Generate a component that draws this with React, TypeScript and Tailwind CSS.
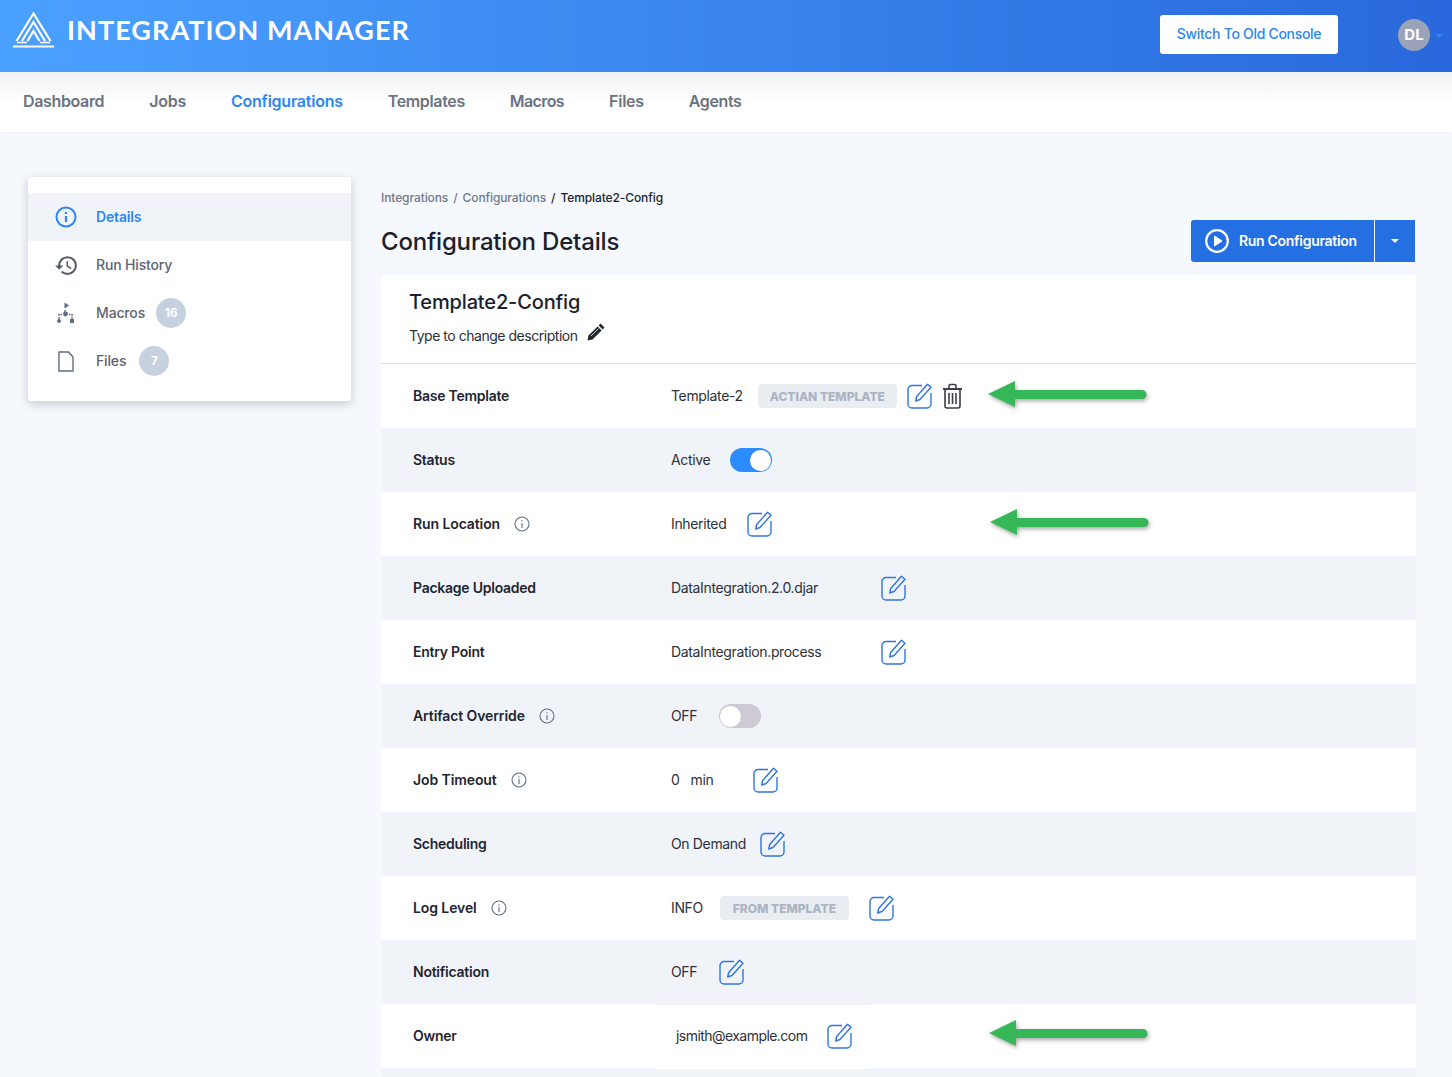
import React from "react";
import { MdHistory } from "react-icons/md";

const font = { fontFamily: '"Inter", sans-serif' };

function EditIcon() {
  return (
    <svg width="25" height="26" viewBox="0 0 25 26" fill="none" stroke="#2f74e0" strokeWidth="1.4" className="shrink-0">
      <path d="M15 2.5H5a4 4 0 0 0-4 4V21a4 4 0 0 0 4 4h15a4 4 0 0 0 4-4V10" />
      <path d="M20.5 1.3 L24 4.3 L13 16.5 L8.7 18 L9.7 13.5 Z" strokeLinejoin="round" />
    </svg>
  );
}

function InfoSmall() {
  return (
    <svg width="16" height="16" viewBox="0 0 16 16" fill="none" stroke="#5f6e85" strokeWidth="1.1" className="shrink-0">
      <circle cx="8" cy="8" r="7" />
      <path d="M8 7v5M8 4.2v1.2" />
    </svg>
  );
}

function TrashIcon() {
  return (
    <svg width="21" height="26" viewBox="0 0 21 26" fill="none" stroke="#3b3f46" strokeWidth="1.6" className="shrink-0">
      <path d="M1 6h19" strokeWidth="2" />
      <path d="M7 5.5V3a1.5 1.5 0 0 1 1.5-1.5h4A1.5 1.5 0 0 1 14 3v2.5" />
      <path d="M3 6.5V23a2 2 0 0 0 2 2h11a2 2 0 0 0 2-2V6.5" />
      <path d="M7 10v11M10.5 10v11M14 10v11" />
    </svg>
  );
}

function Arrow() {
  return (
    <svg width="166" height="36" viewBox="0 0 166 36" className="drop-shadow-[1px_2px_2px_rgba(0,0,0,0.35)]">
      <path d="M0 16 L27 3 V12 H154 a4.5 4.5 0 0 1 0 9 H27 V29 Z" fill="#36b858" />
    </svg>
  );
}

function Logo() {
  return (
    <svg width="43" height="37" viewBox="0 0 43 37" fill="none" stroke="#fff" strokeWidth="2.2">
      <path d="M4.5 30 L21.5 2.5 L38.5 30" />
      <path d="M10 30 L21.5 11 L33 30" />
      <path d="M15.5 30 L21.5 20 L27.5 30" />
      <path d="M1 35.5h41" strokeWidth="2" />
      <path d="M5 31.5h10M28 31.5h10" strokeWidth="1.6" />
    </svg>
  );
}

function MacrosIcon() {
  return (
    <svg width="20" height="22" viewBox="0 0 20 22" fill="#5f6d85">
      <path d="M8.5 0.5 L13 3.5 L8.5 6.5 Z" />
      <path d="M9 8v2M9 14v-1" stroke="#5f6d85" strokeWidth="1.4" />
      <circle cx="9.5" cy="12" r="2.4" />
      <path d="M3 17v-4.5h3M16 17v-4.5h-3" fill="none" stroke="#5f6d85" strokeWidth="1.4" strokeDasharray="2 1" />
      <circle cx="3" cy="19" r="2" />
      <rect x="14" y="17" width="4" height="4" />
    </svg>
  );
}

function FileIcon() {
  return (
    <svg width="16" height="21" viewBox="0 0 16 21" fill="none" stroke="#5f6d85" strokeWidth="1.4">
      <path d="M1 1h9.5L15 6v14H1Z" />
    </svg>
  );
}

function Toggle({ on }: { on: boolean }) {
  return on ? (
    <div className="w-[42px] h-6 rounded-full bg-[#2a8cff] flex items-center justify-end pr-[1px]">
      <div className="w-[21px] h-[21px] rounded-full bg-white" />
    </div>
  ) : (
    <div className="w-[42px] h-6 rounded-full bg-[#cfc9d4] flex items-center pl-[1px]">
      <div className="w-[21px] h-[21px] rounded-full bg-white" />
    </div>
  );
}

function Tag({ children, w }: { children: React.ReactNode; w: string }) {
  return (
    <span className={`${w} h-6 pt-[2px] rounded bg-[#e9edf2] flex items-center justify-center text-[12px] font-extrabold text-[#aab4c3] tracking-[0px]`}>
      {children}
    </span>
  );
}

function V({ children, className = "" }: { children: React.ReactNode; className?: string }) {
  return <span className={`pb-[2px] ${className}`}>{children}</span>;
}

function Row({ label, info, shaded, children, arrow, top = "top-[14px]" }: { label: string; info?: boolean; shaded?: boolean; children?: React.ReactNode; arrow?: string; top?: string }) {
  return (
    <div className={`relative h-16 flex items-center pl-8 text-[14px] ${shaded ? "bg-[#f0f4f9]" : "bg-white"}`}>
      <div className="w-[258px] shrink-0 flex items-center font-semibold text-[#1f2530]">
        <span className={`pb-[2px] ${info ? "tracking-[-0.1px]" : "tracking-[-0.25px]"}`}>{label}</span>
        {info && <span className="ml-[14px]"><InfoSmall /></span>}
      </div>
      <div className="flex items-center text-[#2b303a] tracking-[-0.35px]">{children}</div>
      {arrow && <div className={`absolute ${top} ${arrow}`}><Arrow /></div>}
    </div>
  );
}

export default function App() {
  return (
    <div className="h-screen overflow-hidden bg-[#f5f8fc]" style={font}>
      <header className="h-[72px] flex items-center justify-between bg-gradient-to-r from-[#4ba1ff] to-[#2968dc]">
        <div className="flex items-center pl-3 pb-[14px]">
          <Logo />
          <span className="ml-3 text-[27px] font-bold text-white tracking-[1.05px] leading-none" style={{ fontFamily: '"Lato", sans-serif' }}>
            INTEGRATION MANAGER
          </span>
        </div>
        <div className="flex items-center pr-[9px]">
          <button className="w-[178px] h-[39px] pb-[2px] mb-[3px] rounded-[3px] bg-white text-[14px] font-medium tracking-[-0.3px] text-[#2c86f5]">
            Switch To Old Console
          </button>
          <div className="ml-[60px] mb-[2px] w-8 h-8 rounded-full bg-[#9aa3b8] flex items-center justify-center text-[15px] font-bold text-white">DL</div>
          <span className="ml-[5px] w-0 h-0 border-x-[4px] border-x-transparent border-t-[4px] border-t-[#2c86f5]" />
        </div>
      </header>

      <nav className="h-[60px] pb-[2px] flex items-center gap-[45px] pl-[23px] bg-gradient-to-b from-[#eef0f2] via-white to-white text-[16px] font-semibold tracking-[-0.25px] text-[#6b7280] shadow-[0_1px_2px_rgba(0,0,0,0.03)]">
        <span className="tracking-[-0.35px]">Dashboard</span>
        <span>Jobs</span>
        <span className="text-[#2c86f5]">Configurations</span>
        <span className="tracking-[-0.35px]">Templates</span>
        <span className="tracking-[-0.6px]">Macros</span>
        <span>Files</span>
        <span className="tracking-[-0.4px]">Agents</span>
      </nav>

      <div className="flex items-start pt-[45px] pl-7">
        <aside className="w-[323px] h-[224px] shrink-0 py-4 rounded-[3px] bg-white shadow-[0_3px_10px_rgba(70,85,110,0.28)] text-[14px] font-medium tracking-[-0.15px] text-[#5d6470]">
          <div className="h-12 flex items-center bg-[#f0f4f9] pl-[27px] text-[#2c86f5] font-semibold">
            <svg width="22" height="22" viewBox="0 0 22 22" fill="none" stroke="#2c86f5" strokeWidth="2">
              <circle cx="11" cy="11" r="9.5" />
              <path d="M11 10v6M11 6v2" strokeWidth="2.2" />
            </svg>
            <V className="ml-[19px]">Details</V>
          </div>
          <div className="h-12 flex items-center pl-[26px]">
            <MdHistory size={25} color="#555b66" />
            <V className="ml-[17px]">Run History</V>
          </div>
          <div className="h-12 flex items-center pl-[28px]">
            <MacrosIcon />
            <V className="ml-5">Macros</V>
            <span className="ml-[11px] w-[30px] h-[30px] rounded-full bg-[#c5d1de] flex items-center justify-center text-[12px] font-bold text-white">16</span>
          </div>
          <div className="h-12 flex items-center pl-[30px]">
            <FileIcon />
            <V className="ml-[22px]">Files</V>
            <span className="ml-[13px] w-[30px] h-[30px] rounded-full bg-[#c5d1de] flex items-center justify-center text-[12px] font-bold text-white">7</span>
          </div>
        </aside>

        <main className="ml-[30px] w-[1035px]">
          <div className="flex items-center h-[16px] mt-[13px] text-[12px] font-medium tracking-[-0.1px] text-[#6d7a8d]">
            <span>Integrations</span>
            <span className="mx-[5px]">/</span>
            <span>Configurations</span>
            <span className="mx-[5px] text-[#20252e]">/</span>
            <span className="text-[#20252e]">Template2-Config</span>
          </div>
          <div className="flex items-center justify-between h-[42px] mt-[14px] mb-[13px]">
            <h1 className="text-[24px] pt-[2px] font-medium tracking-[-0.17px] text-[#1c2029] leading-none">Configuration Details</h1>
            <div className="flex h-[42px] mr-px">
              <button className="w-[183px] flex items-center pl-[14px] rounded-l-[3px] bg-[#2470e2] text-[14px] font-semibold tracking-[-0.3px] text-white">
                <svg width="24" height="24" viewBox="0 0 24 24" fill="none" stroke="#fff" strokeWidth="2.2">
                  <circle cx="12" cy="12" r="10.8" />
                  <path d="M9.5 7 L17 12 L9.5 17 Z" fill="#fff" strokeWidth="1" />
                </svg>
                <V className="ml-[10px]">Run Configuration</V>
              </button>
              <div className="w-10 ml-px flex items-center justify-center bg-[#2470e2]">
                <span className="w-0 h-0 border-x-[4px] border-x-transparent border-t-[4px] border-t-white" />
              </div>
            </div>
          </div>

          <section>
            <div className="h-[89px] bg-white pl-7 pt-[13px] border-b border-[#dcdfe6]">
              <div className="text-[20px] font-medium tracking-[-0.15px] text-[#1c2029] leading-[28px]">Template2-Config</div>
              <div className="flex items-center mt-[7px] text-[14px] text-[#2b303a] tracking-[-0.47px]">
                <span>Type to change description</span>
                <svg width="18" height="18" viewBox="0 0 18 18" className="ml-[9px] mb-[6px]" fill="#23272f">
                  <path d="M13.5 0.5 L17.5 4.5 L15.6 6.4 L11.6 2.4 Z" />
                  <path d="M10.6 3.4 L14.6 7.4 L5.5 16.5 L0.5 17.5 L1.5 12.5 Z" />
                  <path d="M11.5 5.5 L4 13" stroke="#fff" strokeWidth="0.8" />
                </svg>
              </div>
            </div>
            <Row label="Base Template" arrow="left-[607px]">
              <V>Template-2</V>
              <span className="ml-[15px]"><Tag w="w-[139px]">ACTIAN TEMPLATE</Tag></span>
              <span className="ml-[10px]"><EditIcon /></span>
              <span className="ml-[10px]"><TrashIcon /></span>
            </Row>
            <Row label="Status" shaded>
              <V>Active</V>
              <span className="ml-5"><Toggle on /></span>
            </Row>
            <Row label="Run Location" info arrow="left-[609px]">
              <V>Inherited</V>
              <span className="ml-[21px]"><EditIcon /></span>
            </Row>
            <Row label="Package Uploaded" shaded>
              <V className="w-[210px]">DataIntegration.2.0.djar</V>
              <EditIcon />
            </Row>
            <Row label="Entry Point">
              <V className="w-[210px]">DataIntegration.process</V>
              <EditIcon />
            </Row>
            <Row label="Artifact Override" info shaded>
              <V>OFF</V>
              <span className="ml-[22px]"><Toggle on={false} /></span>
            </Row>
            <Row label="Job Timeout" info>
              <V>0</V>
              <V className="ml-[11px]">min</V>
              <span className="ml-[40px]"><EditIcon /></span>
            </Row>
            <Row label="Scheduling" shaded>
              <V>On Demand</V>
              <span className="ml-[14px]"><EditIcon /></span>
            </Row>
            <Row label="Log Level" info>
              <V>INFO</V>
              <span className="ml-[17px]"><Tag w="w-[129px]">FROM TEMPLATE</Tag></span>
              <span className="ml-5"><EditIcon /></span>
            </Row>
            <Row label="Notification" shaded>
              <V>OFF</V>
              <span className="ml-[22px]"><EditIcon /></span>
            </Row>
            <Row label="Owner" arrow="left-[608px]" top="top-[13px]">
              <V className="ml-[5px] tracking-[-0.55px]">jsmith@example.com</V>
              <span className="ml-5"><EditIcon /></span>
              <span className="absolute left-[274px] w-[215px] top-0 h-px bg-[#f0f4f9]" />
              <span className="absolute left-[274px] w-[215px] -bottom-px h-px bg-white z-10" />
            </Row>
            <Row label="" shaded />
          </section>
        </main>
      </div>
    </div>
  );
}
